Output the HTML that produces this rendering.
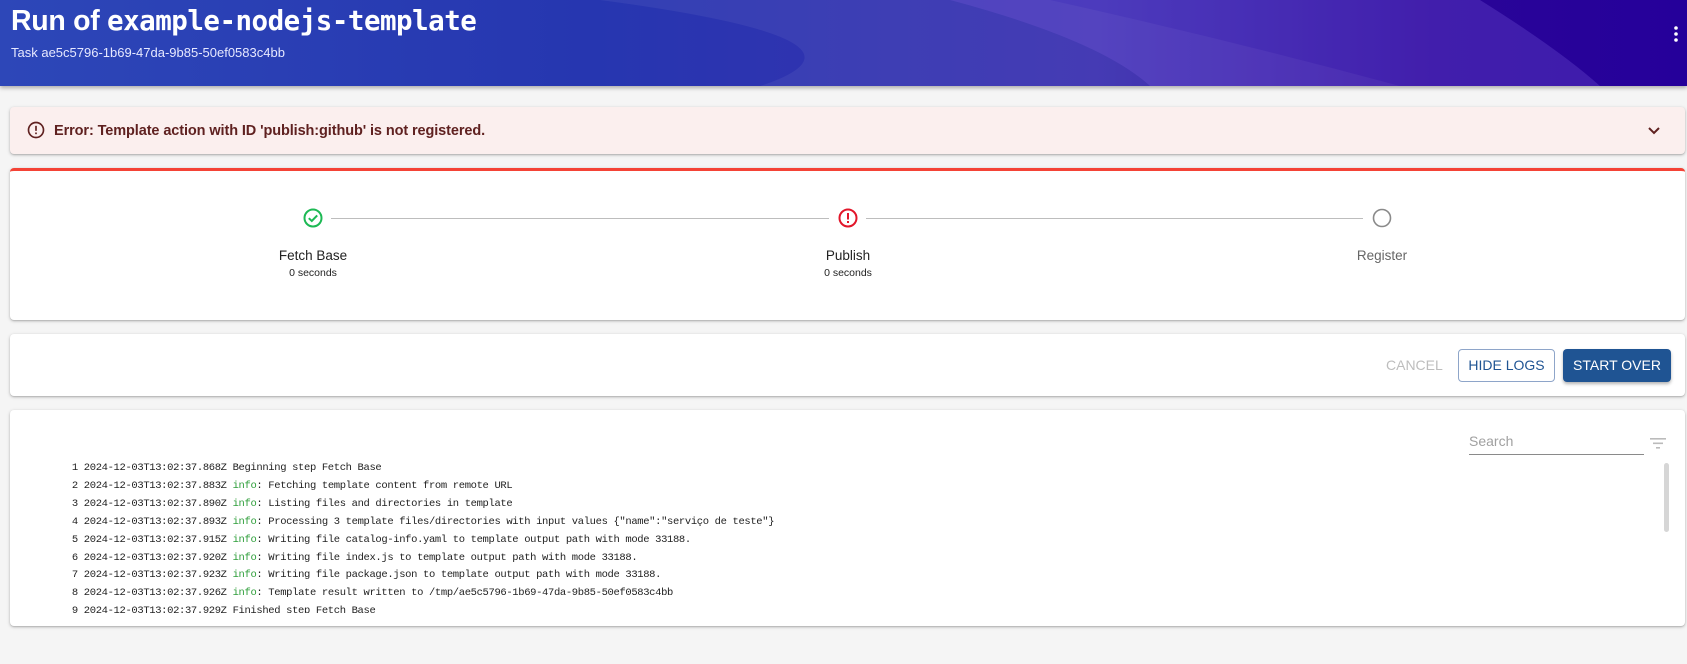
<!DOCTYPE html>
<html><head><meta charset="utf-8"><style>
*{box-sizing:border-box;margin:0;padding:0}
body{width:1687px;height:664px;background:#f5f5f5;font-family:"Liberation Sans",Arial,sans-serif;position:relative;overflow:hidden}
.hdr{position:absolute;left:0;top:0;width:1687px;height:86px;overflow:hidden;background:linear-gradient(90deg,#2d47b8 0%,#2636b0 35%,#3a2fb0 65%,#2a0598 85%,#25009a 100%);box-shadow:0 2px 4px rgba(0,0,0,.3)}
.hdr h1{position:absolute;left:11px;top:5px;color:#fff;font-size:28.5px;font-weight:bold;white-space:nowrap;letter-spacing:-0.3px}
.hdr h1 code{font-family:"DejaVu Sans Mono",monospace;font-size:27.5px;letter-spacing:-0.5px}
.hdr .sub{position:absolute;left:11px;top:45px;color:#e6e8ff;font-size:13px}
.card{position:absolute;left:10px;width:1675px;background:#fff;border-radius:4px;box-shadow:0 1px 3px rgba(0,0,0,.25),0 1px 1px rgba(0,0,0,.1)}
.step{position:absolute;text-align:center;width:200px;margin-left:-100px}
.lbl{font-size:13.5px;color:#222;top:248px}
.dur{font-size:10.5px;color:#222;top:267px}
.line{position:absolute;height:1px;background:#bdbdbd;top:218px}
.logs{position:absolute;left:60px;top:460px;font-family:"Liberation Mono",monospace;font-size:10.5px;color:#222;line-height:17.9px;white-space:pre;height:153px;overflow:hidden;letter-spacing:-0.35px}
.g{color:#2e9e3a}
</style></head><body>
<div class="hdr">
<svg width="1687" height="86" style="position:absolute;left:0;top:0">
<path d="M600 0 L1050 0 Q1230 40 1400 86 L760 86 Q900 40 600 0Z" fill="rgba(255,255,255,0.06)"/>
<path d="M950 0 L1480 0 Q1560 50 1600 86 L1150 86 Q1100 40 950 0Z" fill="rgba(120,90,220,0.3)"/>
<circle cx="1676" cy="28" r="1.8" fill="#fff"/><circle cx="1676" cy="34" r="1.8" fill="#fff"/><circle cx="1676" cy="40" r="1.8" fill="#fff"/>
</svg>
<h1>Run of <code>example-nodejs-template</code></h1>
<div class="sub">Task ae5c5796-1b69-47da-9b85-50ef0583c4bb</div>
</div>

<div class="card" style="top:107px;height:47px;background:#fbefee">
<svg width="20" height="20" style="position:absolute;left:16px;top:13px" viewBox="0 0 24 24"><circle cx="12" cy="12" r="9" fill="none" stroke="#5f2120" stroke-width="2"/><rect x="11" y="7" width="2" height="6" fill="#5f2120"/><rect x="11" y="15" width="2" height="2" fill="#5f2120"/></svg>
<div style="position:absolute;left:44px;top:16px;font-size:14.5px;font-weight:bold;color:#5f2120;letter-spacing:-0.1px">Error: Template action with ID 'publish:github' is not registered.</div>
<svg width="14" height="10" style="position:absolute;left:1637px;top:19px" viewBox="0 0 14 10"><path d="M2 2 L7 7 L12 2" fill="none" stroke="#5f2120" stroke-width="2"/></svg>
</div>

<div class="card" style="top:168px;height:152px;border-top:3px solid #f44336"></div>
<div class="line" style="left:331px;width:498px"></div>
<div class="line" style="left:866px;width:497px"></div>
<svg width="22" height="22" style="position:absolute;left:302px;top:207px" viewBox="0 0 22 22"><circle cx="11" cy="11" r="8.5" fill="none" stroke="#1db954" stroke-width="2"/><path d="M6.8 11.2 L9.8 14 L15.2 8.4" fill="none" stroke="#1db954" stroke-width="2"/></svg>
<svg width="22" height="22" style="position:absolute;left:837px;top:207px" viewBox="0 0 22 22"><circle cx="11" cy="11" r="8.5" fill="none" stroke="#e2162a" stroke-width="2"/><rect x="10" y="6" width="2" height="6.5" fill="#e2162a"/><rect x="10" y="14" width="2" height="2" fill="#e2162a"/></svg>
<svg width="22" height="22" style="position:absolute;left:1371px;top:207px" viewBox="0 0 22 22"><circle cx="11" cy="11" r="8.5" fill="none" stroke="#8a8a8a" stroke-width="1.6"/></svg>
<div class="step lbl" style="left:313px">Fetch Base</div>
<div class="step dur" style="left:313px">0 seconds</div>
<div class="step lbl" style="left:848px">Publish</div>
<div class="step dur" style="left:848px">0 seconds</div>
<div class="step lbl" style="left:1382px;color:#666">Register</div>

<div class="card" style="top:334px;height:62px"></div>
<div style="position:absolute;left:1386px;top:357px;font-size:14px;color:#bdbdbd">CANCEL</div>
<div style="position:absolute;left:1458px;top:349px;width:97px;height:33px;border:1px solid #8ea5c9;border-radius:4px;color:#1f5493;font-size:14px;text-align:center;line-height:31px">HIDE LOGS</div>
<div style="position:absolute;left:1563px;top:349px;width:108px;height:33px;background:#1f5493;border-radius:4px;color:#fff;font-size:14px;text-align:center;line-height:33px;box-shadow:0 2px 3px rgba(0,0,0,.3)">START OVER</div>

<div class="card" style="top:410px;height:216px"></div>
<div style="position:absolute;left:1469px;top:433px;font-size:14px;color:#a0a0a0">Search</div>
<div style="position:absolute;left:1469px;top:454px;width:175px;height:1px;background:#8a8a8a"></div>
<svg width="18" height="14" style="position:absolute;left:1649px;top:436px" viewBox="0 0 18 14"><rect x="1" y="2" width="16" height="1.6" fill="#bbb"/><rect x="4" y="6.5" width="10" height="1.6" fill="#bbb"/><rect x="7" y="11" width="4" height="1.6" fill="#bbb"/></svg>
<div style="position:absolute;left:1664px;top:463px;width:5px;height:69px;background:#d6d6d6;border-radius:3px"></div>
<div class="logs">  1 2024-12-03T13:02:37.868Z Beginning step Fetch Base
  2 2024-12-03T13:02:37.883Z <span class="g">info</span>: Fetching template content from remote URL
  3 2024-12-03T13:02:37.890Z <span class="g">info</span>: Listing files and directories in template
  4 2024-12-03T13:02:37.893Z <span class="g">info</span>: Processing 3 template files/directories with input values {"name":"serviço de teste"}
  5 2024-12-03T13:02:37.915Z <span class="g">info</span>: Writing file catalog-info.yaml to template output path with mode 33188.
  6 2024-12-03T13:02:37.920Z <span class="g">info</span>: Writing file index.js to template output path with mode 33188.
  7 2024-12-03T13:02:37.923Z <span class="g">info</span>: Writing file package.json to template output path with mode 33188.
  8 2024-12-03T13:02:37.926Z <span class="g">info</span>: Template result written to /tmp/ae5c5796-1b69-47da-9b85-50ef0583c4bb
  9 2024-12-03T13:02:37.929Z Finished step Fetch Base</div>
</body></html>
